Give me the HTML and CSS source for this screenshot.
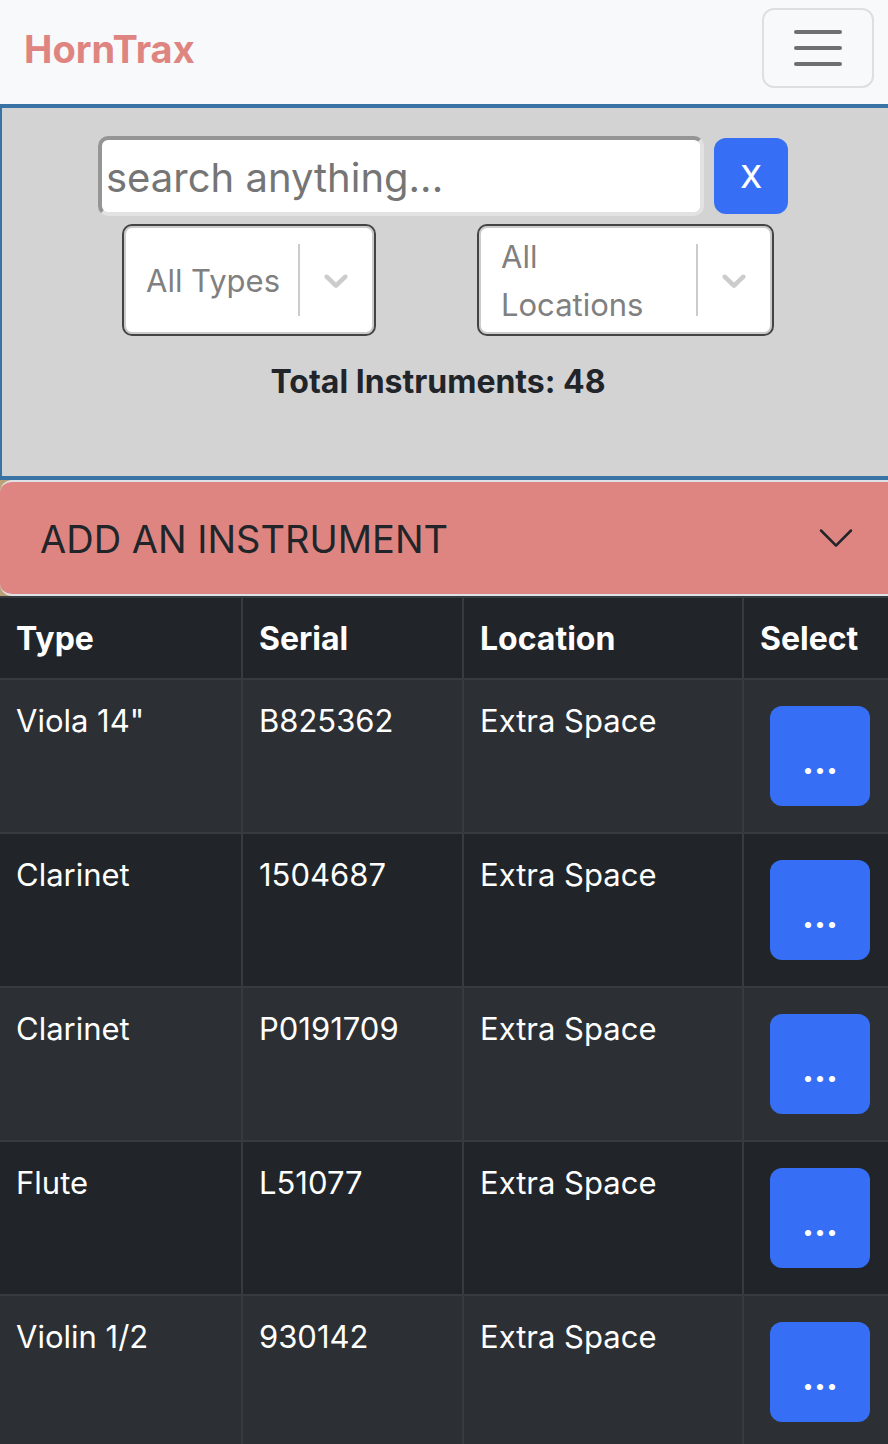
FILE: index.html
```html
<!DOCTYPE html>
<html lang="en">
<head>
<meta charset="utf-8">
<meta name="viewport" content="width=device-width, initial-scale=1">
<title>HornTrax</title>
<link rel="stylesheet" href="styles.css">
</head>
<body>
<header class="navbar">
  <a class="brand" href="#">HornTrax</a>
  <button class="toggler" type="button" aria-label="Toggle navigation">
    <svg width="60" height="60" viewBox="0 0 30 30" aria-hidden="true"><path d="M4 7h22M4 15h22M4 23h22" stroke="#6f7072" stroke-width="2" stroke-linecap="round"/></svg>
  </button>
</header>
<main>
  <section class="filters" aria-label="Filters">
    <div class="search-row">
      <input class="search" type="text" placeholder="search anything..." aria-label="Search instruments">
      <button class="btn clear" type="button" aria-label="Clear search">X</button>
    </div>
    <div class="select-row">
      <div class="picker picker-types">
        <select class="picker-select" aria-label="Type"><option>All Types</option></select>
        <svg class="chevron" viewBox="0 0 20 20" aria-hidden="true"><path d="M4.516 7.548c0.436-0.446 1.043-0.481 1.576 0l3.908 3.747 3.908-3.747c0.533-0.481 1.141-0.446 1.574 0 0.436 0.445 0.408 1.197 0 1.615-0.406 0.418-4.695 4.502-4.695 4.502-0.217 0.223-0.502 0.335-0.787 0.335s-0.57-0.112-0.789-0.335c0 0-4.287-4.084-4.695-4.502s-0.436-1.17 0-1.615z" fill="#ccc"/></svg>
      </div>
      <div class="picker picker-locations">
        <select class="picker-select" aria-label="Location"><option>All Locations</option></select>
        <svg class="chevron" viewBox="0 0 20 20" aria-hidden="true"><path d="M4.516 7.548c0.436-0.446 1.043-0.481 1.576 0l3.908 3.747 3.908-3.747c0.533-0.481 1.141-0.446 1.574 0 0.436 0.445 0.408 1.197 0 1.615-0.406 0.418-4.695 4.502-4.695 4.502-0.217 0.223-0.502 0.335-0.787 0.335s-0.57-0.112-0.789-0.335c0 0-4.287-4.084-4.695-4.502s-0.436-1.17 0-1.615z" fill="#ccc"/></svg>
      </div>
    </div>
    <p class="total">Total Instruments: 48</p>
  </section>
  <button class="accordion" type="button" aria-expanded="false">
    <span>ADD AN INSTRUMENT</span>
    <svg width="40" height="40" viewBox="0 0 16 16" aria-hidden="true"><path fill="#212529" d="M1.646 4.646a.5.5 0 0 1 .708 0L8 10.293l5.646-5.647a.5.5 0 0 1 .708.708l-6 6a.5.5 0 0 1-.708 0l-6-6a.5.5 0 0 1 0-.708z"/></svg>
  </button>
  <table class="instruments">
    <colgroup><col class="col-type"><col class="col-serial"><col class="col-location"><col class="col-select"></colgroup>
    <thead>
      <tr><th scope="col">Type</th><th scope="col">Serial</th><th scope="col">Location</th><th scope="col">Select</th></tr>
    </thead>
    <tbody>
      <tr><td>Viola 14"</td><td>B825362</td><td>Extra Space</td><td><button class="btn more" type="button">...</button></td></tr>
      <tr><td>Clarinet</td><td>1504687</td><td>Extra Space</td><td><button class="btn more" type="button">...</button></td></tr>
      <tr><td>Clarinet</td><td>P0191709</td><td>Extra Space</td><td><button class="btn more" type="button">...</button></td></tr>
      <tr><td>Flute</td><td>L51077</td><td>Extra Space</td><td><button class="btn more" type="button">...</button></td></tr>
      <tr><td>Violin 1/2</td><td>930142</td><td>Extra Space</td><td><button class="btn more" type="button">...</button></td></tr>
    </tbody>
  </table>
</main>
</body>
</html>
```
FILE: styles.css
```css
*, *::before, *::after { box-sizing: border-box; }
html { scrollbar-width: none; }
body {
  margin: 0;
  background: #b9a077;
  color: #212529;
  font-family: Inter, "Liberation Sans", sans-serif;
  font-size: 32px;
  line-height: 48px;
}
button, input, select { font: inherit; }
.navbar {
  display: flex;
  align-items: center;
  justify-content: space-between;
  padding: 8px 14px 16px 24px;
  background: #f8f9fa;
}
.brand {
  padding-top: 2px;
  color: #df8581;
  font-size: 38px;
  font-weight: 700;
  text-decoration: none;
}
.toggler {
  display: flex;
  align-items: center;
  justify-content: center;
  width: 112px;
  height: 80px;
  padding: 0;
  background: transparent;
  border: 2px solid #dedfe0;
  border-radius: 12px;
}
.filters {
  padding: 28px 0 70px;
  background: #d3d3d3;
  border: solid #3873a3;
  border-width: 4px 0 4px 2px;
}
.search-row {
  display: flex;
  align-items: center;
  gap: 10px;
  padding: 0 100px 0 96px;
}
.search {
  flex: 1;
  min-width: 0;
  height: 80px;
  padding: 4px 4px 2px;
  background: #fff;
  border: 4px solid;
  border-color: #959595 #e2e2e2 #e2e2e2 #959595;
  border-radius: 10px;
  font-size: 40px;
}
.search::placeholder { color: #757575; opacity: 1; }
.btn {
  background: #366ff5;
  border: 0;
  border-radius: 12px;
  color: #fff;
}
.clear {
  width: 74px;
  height: 76px;
  padding: 2px 0 0;
  font-size: 31px;
  font-weight: 500;
}
.select-row {
  display: flex;
  justify-content: space-between;
  padding: 8px 114px 0 120px;
}
.picker {
  display: grid;
  align-items: center;
  height: 112px;
  background: #fff;
  border: 2px solid #444;
  border-radius: 10px;
  box-shadow: inset 0 0 0 2px #ccc;
}
.picker-types { width: 254px; }
.picker-locations { width: 297px; }
.picker-select {
  grid-area: 1 / 1;
  width: 100%;
  height: 108px;
  padding: 2px 78px 0 22px;
  appearance: none;
  background: linear-gradient(#ccc, #ccc) right 74px center / 2px 72px no-repeat;
  border: 0;
  color: #808080;
  font-size: 31px;
  line-height: 48px;
  white-space: normal;
}
.picker-locations .picker-select { padding-right: 96px; }
.chevron {
  grid-area: 1 / 1;
  justify-self: end;
  width: 40px;
  height: 40px;
  margin-right: 18px;
  pointer-events: none;
}
.total {
  margin: 22px 16px 0 2px;
  font-weight: 700;
  text-align: center;
}
.accordion {
  display: flex;
  align-items: center;
  justify-content: space-between;
  width: 100%;
  height: 116px;
  padding: 0 32px 0 40px;
  background: #df8581;
  border: solid #dee2e6;
  border-width: 2px 0;
  border-radius: 12px 0 0 12px;
  color: #212529;
  font-size: 38px;
  text-align: left;
}
.accordion span { padding-top: 2px; }
.instruments {
  width: 100%;
  table-layout: fixed;
  border-spacing: 0;
  border-top: 2px solid #373b3e;
  background: #212529;
  color: #fff;
}
.col-type { width: 243px; }
.col-serial { width: 221px; }
.col-location { width: 280px; }
.instruments th, .instruments td {
  padding: 17px 0 15px 16px;
  border: solid #373b3e;
  border-width: 0 2px 2px 0;
  text-align: left;
  vertical-align: top;
}
.instruments td { font-size: 31px; }
.instruments th:last-child, .instruments td:last-child { border-right: 0; }
.instruments td:last-child { padding: 16px 0 16px 16px; }
.instruments tbody tr:nth-child(odd) { background: #2c3034; }
.more {
  display: block;
  width: 100px;
  height: 100px;
  margin: 10px;
  padding: 10px 0 0;
  font-size: 36px;
  font-weight: 700;
}
```
